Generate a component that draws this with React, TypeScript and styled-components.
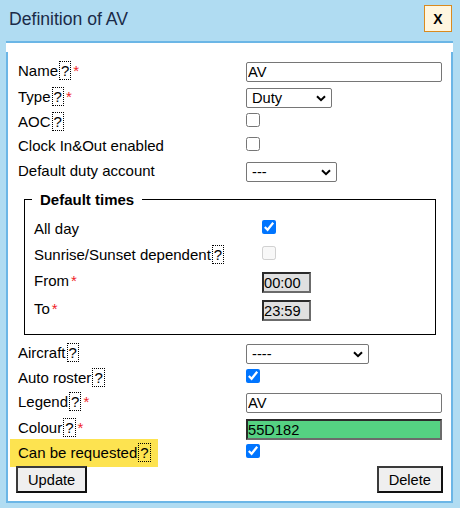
import React from "react";
import styled, { createGlobalStyle } from "styled-components";

const FONT = `"Liberation Sans", Arial, sans-serif`;

const GlobalStyle = createGlobalStyle`
  html, body { margin: 0; padding: 0; }
  body { background: #b0dcf2; font-family: ${FONT}; }
`;

const Dialog = styled.div`
  width: 460px;
  height: 508px;
  background: #b0dcf2;
  overflow: hidden;
`;

const TitleBar = styled.div`
  display: flex;
  justify-content: space-between;
  align-items: flex-start;
  height: 41px;
  padding: 0 8px 0 9px;
  box-sizing: border-box;
`;

const Title = styled.h1`
  margin: 9px 0 0;
  font-size: 17.6px;
  line-height: 20px;
  font-weight: normal;
  color: #1b2b48;
`;

const CloseButton = styled.button`
  margin-top: 5px;
  width: 28px;
  height: 27px;
  box-sizing: border-box;
  border: 1px solid #d98a1f;
  background: #fff6df;
  font: bold 14px ${FONT};
  color: #000;
  padding: 0;
`;

const Panel = styled.div`
  width: 447px;
  margin-left: 6px;
  box-sizing: border-box;
  border-top: 2px solid #6bb6e6;
  background: #fff;
  padding-top: 9px;
`;

const Body = styled.div`
  border: 2px solid #6bb6e6;
  border-top: 0;
  padding: 10px 8px 8px 10px;
`;

const Row = styled.div<{ $h: number }>`
  display: grid;
  grid-template-columns: 228px 1fr;
  align-items: start;
  height: ${(p) => p.$h}px;
`;

const Label = styled.div`
  font-size: 15px;
  line-height: 17px;
  color: #000;
  white-space: nowrap;
`;

const Highlight = styled.span`
  background: #fde350;
  padding: 5px 7px 6px 8px;
  margin-left: -8px;
`;

const Help = styled.span`
  border: 1px dotted #000;
  padding: 0 1px;
  margin-left: 1px;
`;

const Req = styled.span`
  color: #f01e28;
  margin-left: 2px;
`;

const TextInput = styled.input<{ $w: number }>`
  box-sizing: border-box;
  width: ${(p) => p.$w}px;
  height: 20px;
  margin: 0;
  padding: 0 1px;
  border: 1px solid #767676;
  border-radius: 2px;
  font: 14.67px ${FONT};
  color: #000;
  background: #fff;
`;

const FixedInput = styled.input<{ $w: number; $bg: string }>`
  box-sizing: border-box;
  width: ${(p) => p.$w}px;
  height: 21px;
  margin: 0;
  padding: 0;
  border: 2px solid;
  border-color: #2b2b2b #6b6b6b #6b6b6b #2b2b2b;
  font: 14.67px ${FONT};
  color: #000;
  background: ${(p) => p.$bg};
  outline: none;
`;

const SelectWrap = styled.div<{ $w: number }>`
  position: relative;
  width: ${(p) => p.$w}px;
  height: 20px;
`;

const Select = styled.select`
  appearance: none;
  -webkit-appearance: none;
  box-sizing: border-box;
  width: 100%;
  height: 20px;
  margin: 0;
  padding: 0 20px 0 5px;
  font: 14.67px ${FONT};
  color: #000;
  background: #fff;
  border: 1px solid #767676;
  border-radius: 2px;
`;

const Chevron = styled.svg`
  position: absolute;
  right: 6px;
  top: 7px;
  width: 10px;
  height: 7px;
  pointer-events: none;
`;

const Check = styled.input`
  width: 14px;
  height: 14px;
  margin: 0;
`;

const Fieldset = styled.fieldset`
  margin: 5px 7px 9px 6px;
  padding: 12px 0 6px 9px;
  border: 1px solid #000;
  min-width: 0;
`;

const Legend = styled.legend`
  font-weight: bold;
  font-size: 15px;
  line-height: 17px;
  padding: 0 8px;
  margin-left: -2px;
  color: #000;
`;

const ButtonRow = styled.div`
  display: flex;
  justify-content: space-between;
  margin-left: -2px;
  height: 27px;
`;

const Button = styled.button`
  box-sizing: border-box;
  height: 27px;
  padding: 0 10px;
  margin: 0;
  border: 2px solid;
  border-color: #3a3a3a #111 #111 #3a3a3a;
  background: #efefef;
  font: 14.67px ${FONT};
  color: #000;
`;

type LabelProps = { text: string; help?: boolean; req?: boolean };

function FieldLabel({ text, help, req }: LabelProps) {
  return (
    <Label>
      {text}
      {help && <Help>?</Help>}
      {req && <Req>*</Req>}
    </Label>
  );
}

function Dropdown({ width, value }: { width: number; value: string }) {
  return (
    <SelectWrap $w={width}>
      <Select defaultValue={value}>
        <option>{value}</option>
      </Select>
      <Chevron viewBox="0 0 10 7">
        <path d="M1 1.2 L5 5.2 L9 1.2" fill="none" stroke="#000" strokeWidth="2" />
      </Chevron>
    </SelectWrap>
  );
}

export default function App() {
  return (
    <>
      <GlobalStyle />
      <Dialog>
        <TitleBar>
          <Title>Definition of AV</Title>
          <CloseButton>X</CloseButton>
        </TitleBar>
        <Panel>
          <Body>
            <Row $h={26}>
              <FieldLabel text="Name" help req />
              <TextInput $w={196} defaultValue="AV" />
            </Row>
            <Row $h={25}>
              <FieldLabel text="Type" help req />
              <Dropdown width={86} value="Duty" />
            </Row>
            <Row $h={24}>
              <FieldLabel text="AOC" help />
              <Check type="checkbox" />
            </Row>
            <Row $h={25}>
              <FieldLabel text="Clock In&Out enabled" />
              <Check type="checkbox" />
            </Row>
            <Row $h={24}>
              <FieldLabel text="Default duty account" />
              <Dropdown width={91} value="---" />
            </Row>
            <Fieldset>
              <Legend>Default times</Legend>
              <Row $h={26}>
                <FieldLabel text="All day" />
                <Check type="checkbox" defaultChecked />
              </Row>
              <Row $h={26}>
                <FieldLabel text="Sunrise/Sunset dependent" help />
                <Check type="checkbox" disabled />
              </Row>
              <Row $h={28}>
                <FieldLabel text="From" req />
                <FixedInput $w={49} $bg="#e0e0e0" readOnly value="00:00" />
              </Row>
              <Row $h={28}>
                <FieldLabel text="To" req />
                <FixedInput $w={49} $bg="#e0e0e0" readOnly value="23:59" />
              </Row>
            </Fieldset>
            <Row $h={25}>
              <FieldLabel text="Aircraft" help />
              <Dropdown width={123} value="----" />
            </Row>
            <Row $h={24}>
              <FieldLabel text="Auto roster" help />
              <Check type="checkbox" defaultChecked />
            </Row>
            <Row $h={26}>
              <FieldLabel text="Legend" help req />
              <TextInput $w={196} defaultValue="AV" />
            </Row>
            <Row $h={25}>
              <FieldLabel text="Colour" help req />
              <FixedInput $w={196} $bg="#55d182" readOnly value="55D182" />
            </Row>
            <Row $h={22}>
              <Label>
                <Highlight>
                  Can be requested<Help>?</Help>
                </Highlight>
              </Label>
              <Check type="checkbox" defaultChecked />
            </Row>
            <ButtonRow>
              <Button>Update</Button>
              <Button>Delete</Button>
            </ButtonRow>
          </Body>
        </Panel>
      </Dialog>
    </>
  );
}
